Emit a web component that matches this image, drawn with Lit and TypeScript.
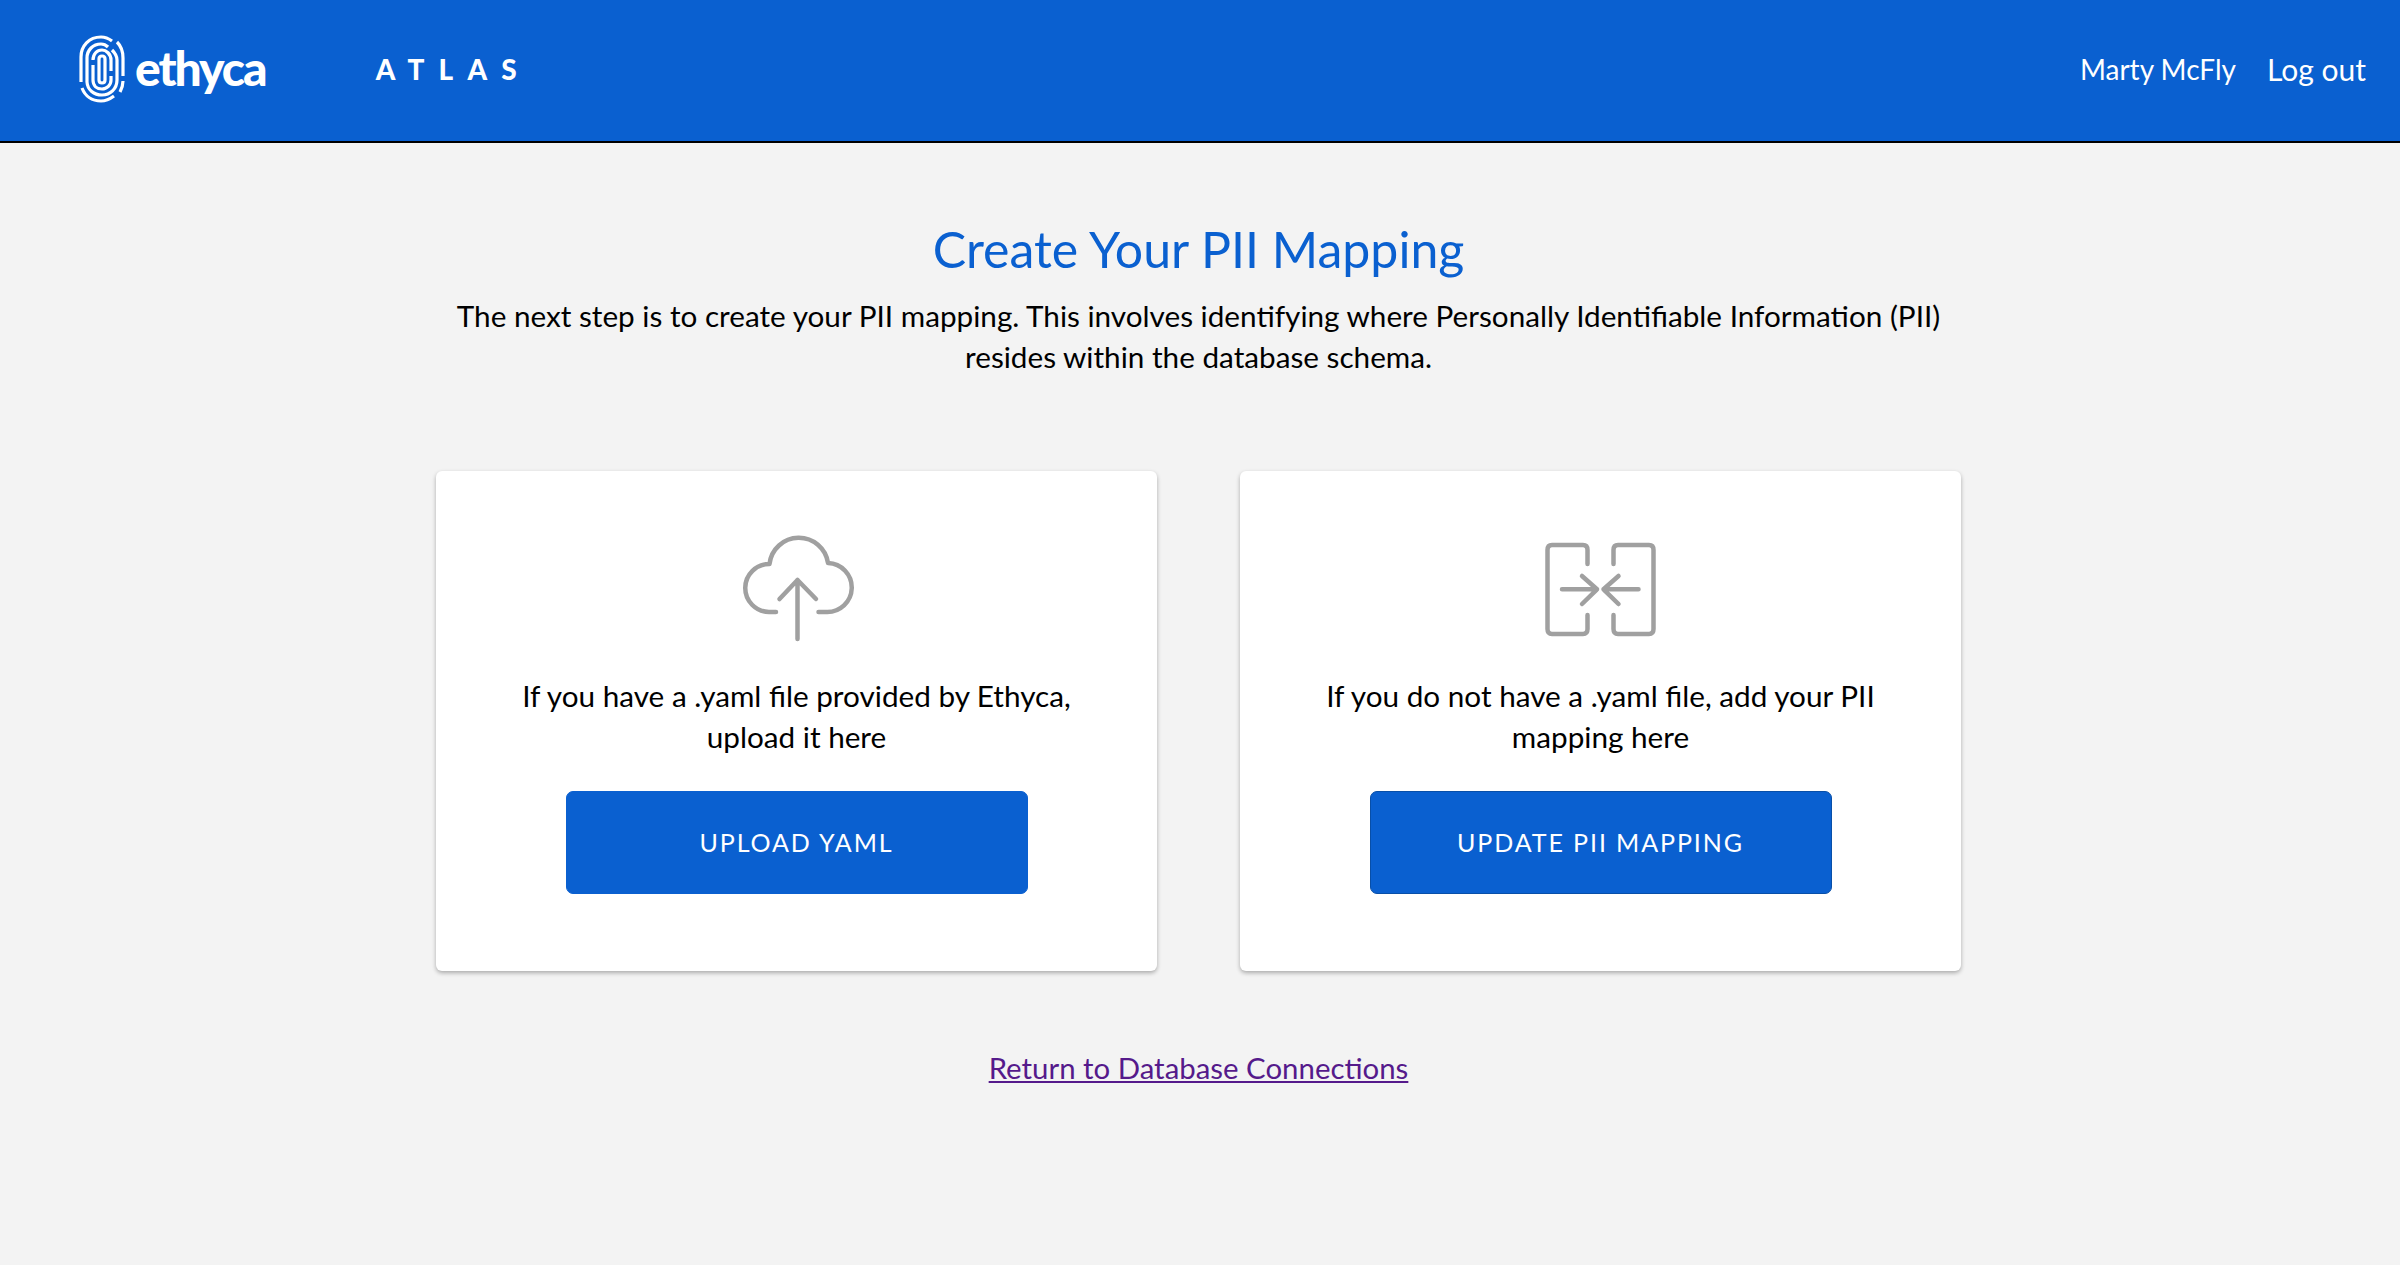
import { LitElement, html, css, svg } from "lit";
import { customElement } from "lit/decorators.js";

const seg = (d: string, w = 3.2) => svg`<path d=${d} fill="none" stroke="#fff" stroke-width=${w} stroke-linecap="butt"/>`;

@customElement("app-root")
export class AppRoot extends LitElement {
  static styles = css`
    :host { display: block; font-family: Lato, "Noto Sans", sans-serif; color: #000; background: #f3f3f3; height: 1265px; overflow: hidden; border-bottom: 1px solid #fff; }
    .header { height: 137px; background: #0a60d0; border-bottom: 2px solid #000; display: flex; align-items: center; padding: 0 34px 4px 79px; color: #fff; }
    .logo { display: flex; align-items: center; }
    .logo svg { display: block; }
    .word { font-weight: 900; font-size: 48px; letter-spacing: -2px; margin-left: 10px; line-height: 1; position: relative; top: -1px; }
    .atlas { font-weight: 900; font-size: 28px; letter-spacing: 14.2px; margin-left: 110px; }
    .spacer { flex: 1; }
    .user { font-size: 28px; }
    .logout { font-size: 30px; margin-left: 31px; }
    .main { display: flex; flex-direction: column; align-items: center; padding: 74px 3px 0 0; }
    h1 { margin: 0; font-weight: 400; font-size: 50px; line-height: 64px; color: #0a60d0; }
    .lead { margin: 14px 0 0; width: 1500px; text-align: center; font-size: 29.7px; line-height: 41px; }
    .cards { display: flex; gap: 83px; margin-top: 94px; }
    .card { width: 721px; height: 500px; background: #fff; border-radius: 6px; box-shadow: 0 2px 4px rgba(0,0,0,.3); display: flex; flex-direction: column; align-items: center; }
    .icon { margin-top: 60px; display: block; }
    .card p { margin: 24px 0 0; width: 640px; text-align: center; font-size: 29.7px; line-height: 41px; }
    button { margin-top: 34px; width: 462px; height: 103px; background: #0a60d0; border: 1px solid #0a60d0; border-radius: 7px; color: #fff; font-family: inherit; font-size: 25px; letter-spacing: 1.9px; padding: 0 0 2px; }
    button.edge { border-color: #084fa8; }
    .back { margin-top: 76px; font-size: 29.4px; line-height: 41px; color: #551a8b; text-decoration: underline; }
  `;

  render() {
    return html`
      <div class="header">
        <div class="logo">
          <svg width="46" height="68" viewBox="0 0 46 68">
            ${seg("M33 6 C29 3 26 2 22 2 C10 2 2 11 2 22 V47")}
            ${seg("M38 7 C42 11 44 17 44 23 V41")}
            ${seg("M44 46 C44 50 43 53 41 57")}
            ${seg("M3 53 C6 61 13 66 22 66 C27 66 31 64 35 61")}
            ${seg("M29 12 C27 10 25 9 22 9 C14 9 8 15 8 23 V47")}
            ${seg("M33 15 C36 18 38 21 38 25 V45 C38 54 31 60 23 60 C15 60 8.5 55 8 47")}
            ${seg("M14 25 C14 19 18 15 23 15 C27 15 32 19 32 25 V36")}
            ${seg("M14 30 V45 C14 51 18 54 23 54 C28 54 32 50 32 45 V41")}
            ${seg("M20 45 V24 C20 22 21 21 23 21 C25 21 26 22 26 24 V45 C26 47 25 48 23 48 C21 48 20 47 20 45 Z")}
          </svg>
          <span class="word">ethyca</span>
        </div>
        <span class="atlas">ATLAS</span>
        <span class="spacer"></span>
        <span class="user">Marty McFly</span>
        <span class="logout">Log out</span>
      </div>
      <div class="main">
        <h1>Create Your PII Mapping</h1>
        <p class="lead">The next step is to create your PII mapping. This involves identifying where Personally Identifiable Information (PII)<br />resides within the database schema.</p>
        <div class="cards">
          <div class="card">
            <svg class="icon" width="120" height="120" viewBox="0 0 120 120" fill="none" stroke="#a0a0a0" stroke-width="4.5" stroke-linecap="round" stroke-linejoin="round">
              <path d="M39 81 H32 A24 24 0 0 1 32.5 33 A29.5 29.5 0 0 1 91 32 A24.5 24.5 0 0 1 89.5 81 H81.5" />
              <path d="M60.5 108 V49 M42.5 68 L60.5 49 L79 68" />
            </svg>
            <p>If you have a .yaml file provided by Ethyca,<br />upload it here</p>
            <button>UPLOAD YAML</button>
          </div>
          <div class="card">
            <svg class="icon" width="120" height="120" viewBox="0 0 120 120" fill="none" stroke="#a0a0a0" stroke-width="4.5" stroke-linecap="round" stroke-linejoin="round">
              <path d="M46.5 33 V19 C46.5 16 45 14 42 14 H11 C8 14 6.5 16 6.5 19 V98 C6.5 101 8 103 11 103 H42 C45 103 46.5 101 46.5 98 V84" />
              <path d="M72.5 33 V19 C72.5 16 74 14 77 14 H108 C111 14 112.5 16 112.5 19 V98 C112.5 101 111 103 108 103 H77 C74 103 72.5 101 72.5 98 V84" />
              <path d="M21 58.3 H56 M41 45 L56 58.3 L41 73" />
              <path d="M97.5 58.3 H62.5 M77.5 45 L62.5 58.3 L77.5 73" />
            </svg>
            <p>If you do not have a .yaml file, add your PII<br />mapping here</p>
            <button class="edge">UPDATE PII MAPPING</button>
          </div>
        </div>
        <a class="back" href="#">Return to Database Connections</a>
      </div>
    `;
  }
}
